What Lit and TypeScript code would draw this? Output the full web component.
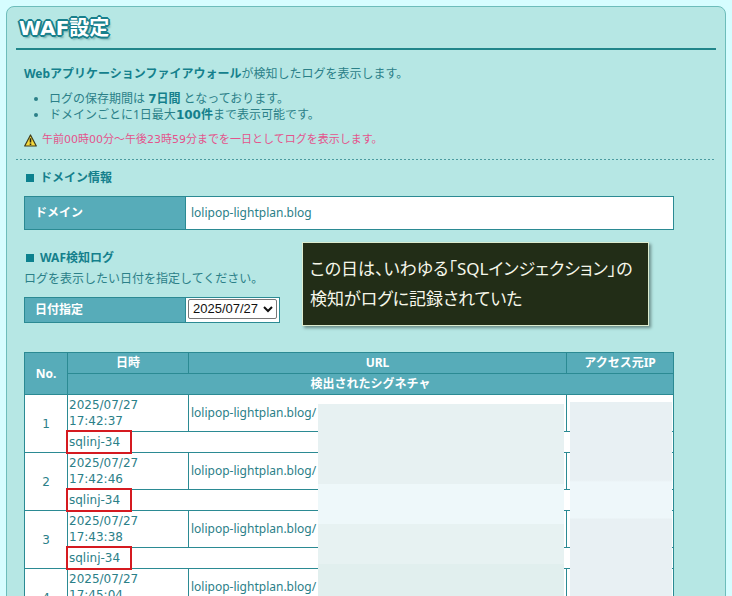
import { LitElement, html, css } from "lit";
import { customElement, state } from "lit/decorators.js";

interface LogEntry {
  date: string;
  time: string;
  url: string;
  signature: string;
  marked: boolean;
}

@customElement("app-root")
export class AppRoot extends LitElement {
  static styles = css`
    :host {
      display: block;
      box-sizing: border-box;
      height: 100vh;
      overflow: hidden;
      padding: 6px;
      background: #d6fdff;
      color: #2b8088;
      font: 12px/16px "Noto Sans", "Noto Sans CJK JP", sans-serif;
    }
    .panel {
      box-sizing: border-box;
      min-height: 100vh;
      border: 1px solid #6dbdbb;
      border-radius: 8px;
      padding: 0 9px;
      background: #b6e7e4;
    }
    .title {
      margin: 0;
      height: 41px;
      border-bottom: 2px solid #21868a;
      padding-left: 3px;
      color: #fff;
      font: 700 20px/42px "DejaVu Sans", "Noto Sans CJK JP", sans-serif;
      text-shadow: 2px 0 #19808c, -2px 0 #19808c, 0 2px #19808c, 0 -2px #19808c,
        1px 1px #19808c, -1px 1px #19808c, 1px -1px #19808c, -1px -1px #19808c,
        2px 3px 2px #6fa9aa;
    }
    .intro {
      padding: 16px 8px 11px;
      background: repeating-linear-gradient(90deg, #4b9ca0 0 2px, transparent 2px 4px) bottom / 100% 1px no-repeat;
    }
    p {
      margin: 0;
    }
    strong {
      color: #14808c;
    }
    .num {
      font-family: "DejaVu Sans", "Noto Sans CJK JP", sans-serif;
    }
    .rules {
      margin: 9px 0 8px;
      padding-left: 25px;
    }
    .note {
      display: flex;
      align-items: center;
      gap: 5px;
      color: #e4548c;
      font: 11px/18px "DejaVu Sans", "Noto Sans CJK JP", sans-serif;
    }
    .warn {
      width: 13px;
      height: 13px;
    }
    .body {
      padding: 10px 42px 0 8px;
    }
    h2 {
      display: flex;
      align-items: center;
      gap: 6px;
      margin: 0;
      padding-left: 2px;
      color: #14808c;
      font-size: 12px;
      line-height: 16px;
    }
    h2::before {
      content: "";
      width: 8px;
      height: 8px;
      background: #0c818e;
    }
    table {
      border-collapse: collapse;
      background: #fff;
    }
    th,
    td {
      border: 1px solid #2b8a93;
      padding: 0 2px;
    }
    th {
      background: #57acb9;
      color: #fff;
    }
    .field th {
      box-sizing: border-box;
      width: 161px;
      padding-left: 10px;
      text-align: left;
    }
    .domain {
      width: 100%;
      margin: 10px 0 20px;
    }
    .domain td {
      height: 32px;
      padding-left: 5px;
    }
    .lead {
      margin: 5px 0 10px;
    }
    .picker {
      position: relative;
      margin-bottom: 29px;
    }
    .picker td {
      height: 24px;
      font-size: 0;
    }
    select {
      width: 89px;
      height: 20px;
      border: 1px solid #777;
      border-radius: 2px;
      padding: 0;
      background: #fff;
      color: #111;
      font: 13px "Liberation Sans", sans-serif;
    }
    .caption {
      position: absolute;
      top: -55px;
      left: 278px;
      box-sizing: border-box;
      width: 347px;
      border: 1px solid #dceccf;
      padding: 11px 7px;
      background: #222d17;
      box-shadow: 2px 2px 3px #6a8c88;
      color: #f6f7ea;
      font: 17px/30px "Noto Sans", "Noto Sans CJK JP", sans-serif;
      font-feature-settings: "palt";
      white-space: nowrap;
    }
    .log {
      position: relative;
    }
    .log table {
      width: 100%;
      table-layout: fixed;
      line-height: 20px;
    }
    .c-no {
      width: 43px;
    }
    .c-date {
      width: 121px;
    }
    .c-ip {
      width: 107px;
    }
    .no {
      text-align: center;
    }
    .no,
    .date,
    .sig {
      font-family: "DejaVu Sans", sans-serif;
    }
    .date {
      padding: 2px 1px;
      line-height: 16px;
    }
    .date span {
      display: block;
    }
    .sig {
      position: relative;
      padding: 0 1px;
    }
    .marked::after {
      content: "";
      position: absolute;
      top: -2px;
      left: -2px;
      box-sizing: border-box;
      width: 66px;
      height: 24px;
      border: 2px solid #d51a20;
    }
    .mask {
      position: absolute;
      bottom: 0;
    }
    .mask-url {
      top: 52px;
      left: 294px;
      right: 110px;
      background: linear-gradient(#e7f1f2 80px, #eef8fa 80px 120px, #e7f2f2 120px 160px, #e1efee 160px);
    }
    .mask-ip {
      top: 50px;
      right: 2px;
      width: 102px;
      background: linear-gradient(#e8f0f3 78px, #eef7fa 80px 116px, #e8f0f3 117px);
    }
  `;

  @state() private day = "2025/07/27";

  private entries: LogEntry[] = ["17:42:37", "17:42:46", "17:43:38", "17:45:04"].map((time) => ({
    date: "2025/07/27",
    time,
    url: "lolipop-lightplan.blog/",
    signature: "sqlinj-34",
    marked: true,
  }));

  private pick(e: Event) {
    this.day = (e.target as HTMLSelectElement).value;
  }

  private row(entry: LogEntry, index: number) {
    return html`
      <tr>
        <td class="no" rowspan="2">${index + 1}</td>
        <td class="date"><span>${entry.date}</span><span>${entry.time}</span></td>
        <td>${entry.url}</td>
        <td></td>
      </tr>
      <tr>
        <td class="sig ${entry.marked ? "marked" : ""}" colspan="3">${entry.signature}</td>
      </tr>
    `;
  }

  render() {
    return html`
      <main class="panel">
        <h1 class="title">WAF設定</h1>
        <section class="intro">
          <p><strong>Webアプリケーションファイアウォール</strong>が検知したログを表示します。</p>
          <ul class="rules">
            <li>ログの保存期間は <strong class="num">7日間</strong> となっております。</li>
            <li>ドメインごとに1日最大<strong class="num">100件</strong>まで表示可能です。</li>
          </ul>
          <p class="note">
            <svg class="warn" viewBox="0 0 13 13" aria-hidden="true">
              <path d="M6.5 1 L12.3 12 H.7 Z" fill="#f4d83c" stroke="#3f3d1c" stroke-width="1.2" stroke-linejoin="round" />
              <path d="M6.5 4.2 V8.4 M6.5 9.4 V11" stroke="#2c2a14" stroke-width="1.6" />
            </svg>
            <span>午前00時00分～午後23時59分までを一日としてログを表示します。</span>
          </p>
        </section>
        <section class="body">
          <h2>ドメイン情報</h2>
          <table class="field domain">
            <tr>
              <th scope="row">ドメイン</th>
              <td>lolipop-lightplan.blog</td>
            </tr>
          </table>
          <h2>WAF検知ログ</h2>
          <p class="lead">ログを表示したい日付を指定してください。</p>
          <div class="picker">
            <table class="field">
              <tr>
                <th scope="row"><label for="day">日付指定</label></th>
                <td>
                  <select id="day" @change=${this.pick}>
                    <option>${this.day}</option>
                  </select>
                </td>
              </tr>
            </table>
            <div class="caption">この日は、いわゆる「SQLインジェクション」の<br />検知がログに記録されていた</div>
          </div>
          <div class="log">
            <table>
              <colgroup>
                <col class="c-no" />
                <col class="c-date" />
                <col />
                <col class="c-ip" />
              </colgroup>
              <thead>
                <tr>
                  <th rowspan="2">No.</th>
                  <th>日時</th>
                  <th>URL</th>
                  <th>アクセス元IP</th>
                </tr>
                <tr>
                  <th colspan="3">検出されたシグネチャ</th>
                </tr>
              </thead>
              <tbody>
                ${this.entries.map((entry, i) => this.row(entry, i))}
              </tbody>
            </table>
            <div class="mask mask-url"></div>
            <div class="mask mask-ip"></div>
          </div>
        </section>
      </main>
    `;
  }
}
